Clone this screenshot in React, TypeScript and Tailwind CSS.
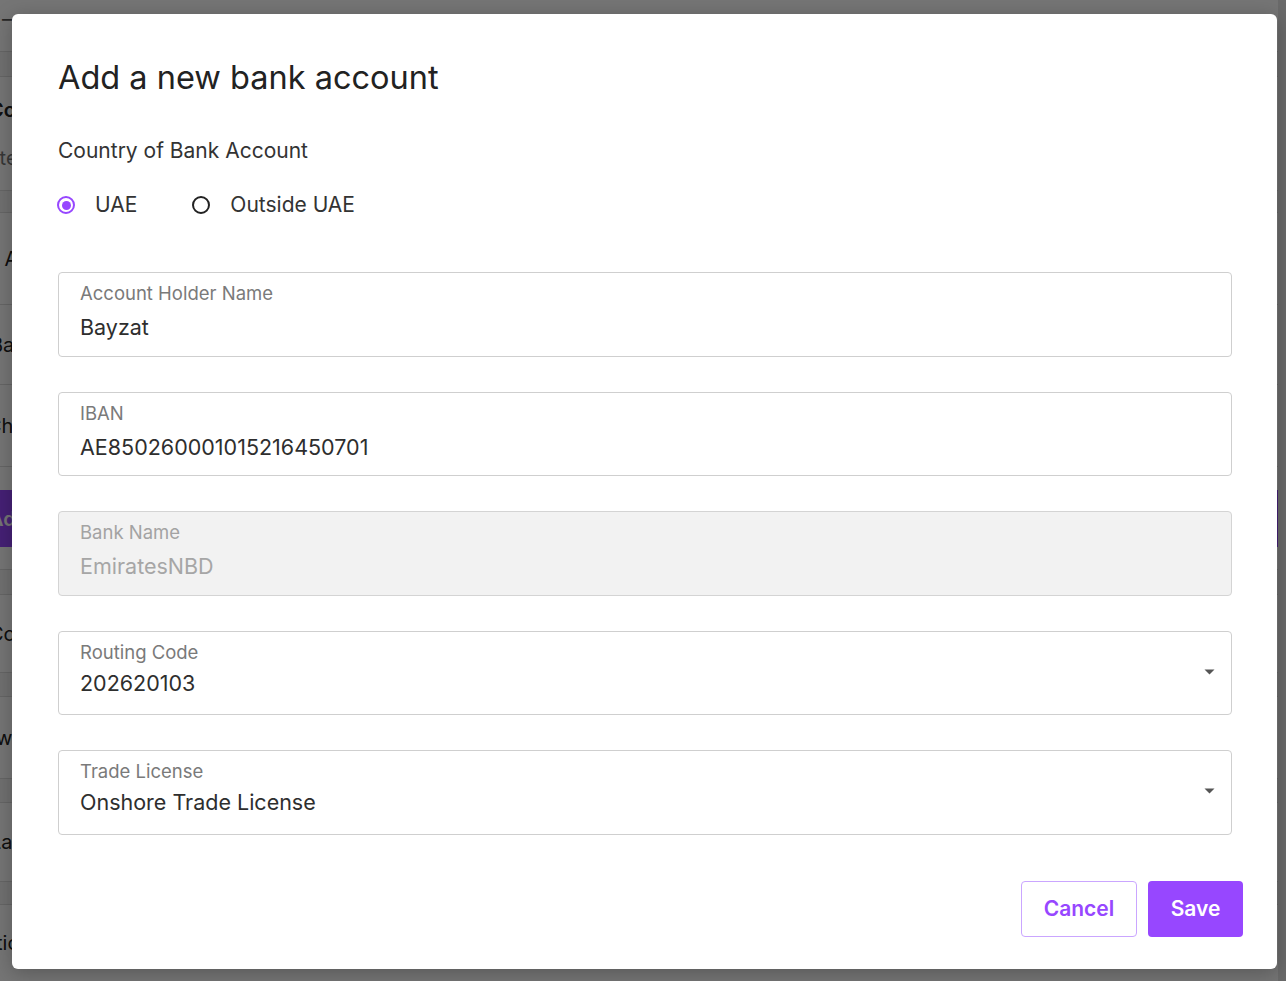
import React, { useState } from "react";

// --- Background page (sits under the dim overlay) ---
const BackgroundPage = () => (
  <div className="flex h-[981px] w-full bg-white">
    <div className="flex flex-1 flex-col overflow-hidden text-[20px] text-[#222]">
      <div className="h-[52px] border-b border-[#ddd] pl-[2px] pt-[4px] text-[#555]">–</div>
      <div className="h-[25px] border-b border-[#ddd] bg-[#f3f3f3]" />
      <div className="flex h-[113px] flex-col justify-center gap-[18px] pl-0 -ml-[11px]">
        <span className="font-semibold">Co</span>
        <span className="text-[#777]">ste</span>
      </div>
      <div className="h-[23px] border-y border-[#ddd] bg-[#f3f3f3]" />
      <div className="flex h-[92px] items-center border-b border-[#ddd] -ml-[12px]">k A</div>
      <div className="flex h-[80px] items-center border-b border-[#ddd] -ml-[10px]">Bank</div>
      <div className="flex h-[82px] items-center border-b border-[#ddd] -ml-[13px]">Ch</div>
      <div className="h-[23px] bg-white" />
      <div className="flex h-[57px] items-center bg-[#9747ff] font-semibold text-white -ml-[11px]">Ad</div>
      <div className="h-[23px] border-b border-[#ddd]" />
      <div className="h-[25px] border-b border-[#ddd] bg-[#f3f3f3]" />
      <div className="flex h-[78px] items-center border-b border-[#ddd] -ml-[11px]">Co</div>
      <div className="h-[24px] border-b border-[#ddd] bg-[#f3f3f3]" />
      <div className="flex h-[82px] items-center border-b border-[#ddd] -ml-[4px]">wa</div>
      <div className="h-[24px] border-b border-[#ddd] bg-[#f3f3f3]" />
      <div className="flex h-[79px] items-center border-b border-[#ddd] -ml-[10px]">Lab</div>
      <div className="h-[23px] border-b border-[#ddd] bg-[#f3f3f3]" />
      <div className="flex h-[76px] items-center -ml-[4px]">tion</div>
    </div>
    <div className="w-[8px] bg-[#e6e6e6]" />
  </div>
);

const Caret = () => (
  <svg width="11" height="6" viewBox="0 0 11 6" className="text-[#555]">
    <path d="M0.5 0.5h10L5.5 5.5z" fill="currentColor" />
  </svg>
);

interface FieldProps {
  label: string;
  value: string;
  disabled?: boolean;
  select?: boolean;
}

const Field = ({ label, value, disabled, select }: FieldProps) => (
  <div
    className={`relative flex h-[84.5px] flex-col rounded-[4px] border px-[21px] pt-[9px] ${
      disabled ? "border-[#d4d4d4] bg-[#f2f2f2]" : "border-[#cfcfcf] bg-white"
    }`}
  >
    <span className={`text-[18.5px] leading-[22px] ${disabled ? "text-[#a3a3a3]" : "text-[#7a7a7a]"}`}>
      {label}
    </span>
    <span
      className={`${select ? "mt-[6px]" : "mt-[9px]"} text-[21.5px] leading-[28px] ${
        disabled ? "text-[#a6a6a6]" : "text-[#2e2e2e]"
      }`}
    >
      {value}
    </span>
    {select && (
      <span className="absolute right-[16px] top-[37px]">
        <Caret />
      </span>
    )}
  </div>
);

const Radio = ({ checked, label, onClick }: { checked: boolean; label: string; onClick: () => void }) => (
  <button type="button" onClick={onClick} className="flex items-center gap-[20px]">
    <span
      className={`flex h-[18px] w-[18px] items-center justify-center rounded-full border-2 ${
        checked ? "border-[#9747ff]" : "border-[#222]"
      }`}
    >
      {checked && <span className="h-[9px] w-[9px] rounded-full bg-[#9747ff]" />}
    </span>
    <span className="text-[21px] leading-[28px] text-[#333]">{label}</span>
  </button>
);

export default function App() {
  const [country, setCountry] = useState<"uae" | "outside">("uae");

  return (
    <div className="relative h-[981px] w-full overflow-hidden font-['Inter',sans-serif]">
      <BackgroundPage />

      {/* dim overlay + dialog */}
      <div className="absolute inset-0 bg-black/[0.54] pl-[12px] pt-[14px]">
        <div className="flex h-[955px] w-[1265px] flex-col rounded-[6px] bg-white pl-[46px] pr-[34px] pt-[44px] shadow-[0_4px_20px_rgba(0,0,0,0.25)]">
          <h1 className="text-[32.5px] leading-[40px] text-[#222]">Add a new bank account</h1>

          <p className="mt-[39px] text-[21px] leading-[28px] text-[#333]">Country of Bank Account</p>

          <div className="mt-[26px] flex items-center gap-[55px] -ml-[1px]">
            <Radio checked={country === "uae"} label="UAE" onClick={() => setCountry("uae")} />
            <Radio checked={country === "outside"} label="Outside UAE" onClick={() => setCountry("outside")} />
          </div>

          <div className="mt-[53px] mr-[11px] flex flex-col gap-[35px]">
            <Field label="Account Holder Name" value="Bayzat" />
            <Field label="IBAN" value="AE850260001015216450701" />
            <Field label="Bank Name" value="EmiratesNBD" disabled />
            <Field label="Routing Code" value="202620103" select />
            <Field label="Trade License" value="Onshore Trade License" select />
          </div>

          <div className="mt-[46px] flex justify-end gap-[11px]">
            <button
              type="button"
              className="h-[56px] w-[116px] rounded-[4px] border border-[#caa6ff] bg-white text-[21px] font-semibold text-[#9747ff]"
            >
              Cancel
            </button>
            <button
              type="button"
              className="h-[56px] w-[95px] rounded-[4px] bg-[#9747ff] text-[21px] font-semibold text-white"
            >
              Save
            </button>
          </div>
        </div>
      </div>
    </div>
  );
}
